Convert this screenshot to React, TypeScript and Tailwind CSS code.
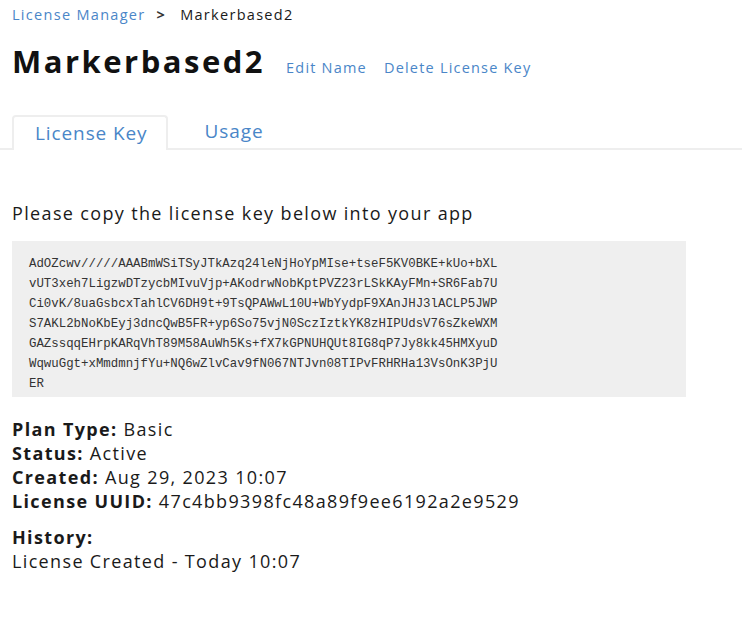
import React from "react";

const keyLines = [
  "AdOZcwv/////AAABmWSiTSyJTkAzq24leNjHoYpMIse+tseF5KV0BKE+kUo+bXL",
  "vUT3xeh7LigzwDTzycbMIvuVjp+AKodrwNobKptPVZ23rLSkKAyFMn+SR6Fab7U",
  "Ci0vK/8uaGsbcxTahlCV6DH9t+9TsQPAWwL10U+WbYydpF9XAnJHJ3lACLP5JWP",
  "S7AKL2bNoKbEyj3dncQwB5FR+yp6So75vjN0SczIztkYK8zHIPUdsV76sZkeWXM",
  "GAZssqqEHrpKARqVhT89M58AuWh5Ks+fX7kGPNUHQUt8IG8qP7Jy8kk45HMXyuD",
  "WqwuGgt+xMmdmnjfYu+NQ6wZlvCav9fN067NTJvn08TIPvFRHRHa13VsOnK3PjU",
  "ER",
];

export default function App() {
  return (
    <div className="min-h-screen bg-white font-['Open_Sans',sans-serif] text-[#1a1a1a]">
      <div className="pl-3">
        <nav className="flex items-center pt-[5px] text-[14.5px] leading-5 tracking-[1.3px]">
          <a className="text-[#4a86c8]">License Manager</a>
          <span className="mr-[14px] ml-[11px] font-bold text-[#333]">&gt;</span>
          <span>Markerbased2</span>
        </nav>

        <div className="mt-[16px] flex items-baseline gap-[21px]">
          <h1 className="text-[31px] font-bold leading-10 tracking-[2.5px] text-[#111]">Markerbased2</h1>
          <div className="flex gap-[17px] text-[14.5px] tracking-[1.2px] text-[#4a86c8]">
            <a>Edit Name</a>
            <a>Delete License Key</a>
          </div>
        </div>
      </div>

      <div className="mt-[34px] flex border-b-2 border-[#eeeeee] pl-[12px]">
        <div className="-mb-[2px] rounded-t-[4px] border-2 border-b-0 border-[#eeeeee] bg-white py-[3px] pr-[18px] pl-[21px] text-[19px] leading-[27px] tracking-[0.9px] text-[#4a86c8]">
          License Key
        </div>
        <div className="px-[37px] py-[3px] text-[19px] leading-[27px] tracking-[0.9px] text-[#4a86c8]">Usage</div>
      </div>

      <div className="px-3">
        <p className="mt-[51px] text-[18px] leading-6 tracking-[1.35px]">Please copy the license key below into your app</p>

        <pre className="mt-[16px] w-[674px] bg-[#efefef] px-[17px] pt-[13px] pb-[3px] font-['Liberation_Mono',monospace] text-[12.4px] leading-5 text-[#333]">
          {keyLines.join("\n")}
        </pre>

        <div className="mt-[20px] text-[18px] leading-6 tracking-[1.35px]">
          <div>
            <b>Plan Type:</b> Basic
          </div>
          <div>
            <b>Status:</b> Active
          </div>
          <div>
            <b>Created:</b> Aug 29, 2023 10:07
          </div>
          <div>
            <b>License UUID:</b> 47c4bb9398fc48a89f9ee6192a2e9529
          </div>
          <div className="mt-3">
            <b>History:</b>
          </div>
          <div>License Created - Today 10:07</div>
        </div>
      </div>
    </div>
  );
}
